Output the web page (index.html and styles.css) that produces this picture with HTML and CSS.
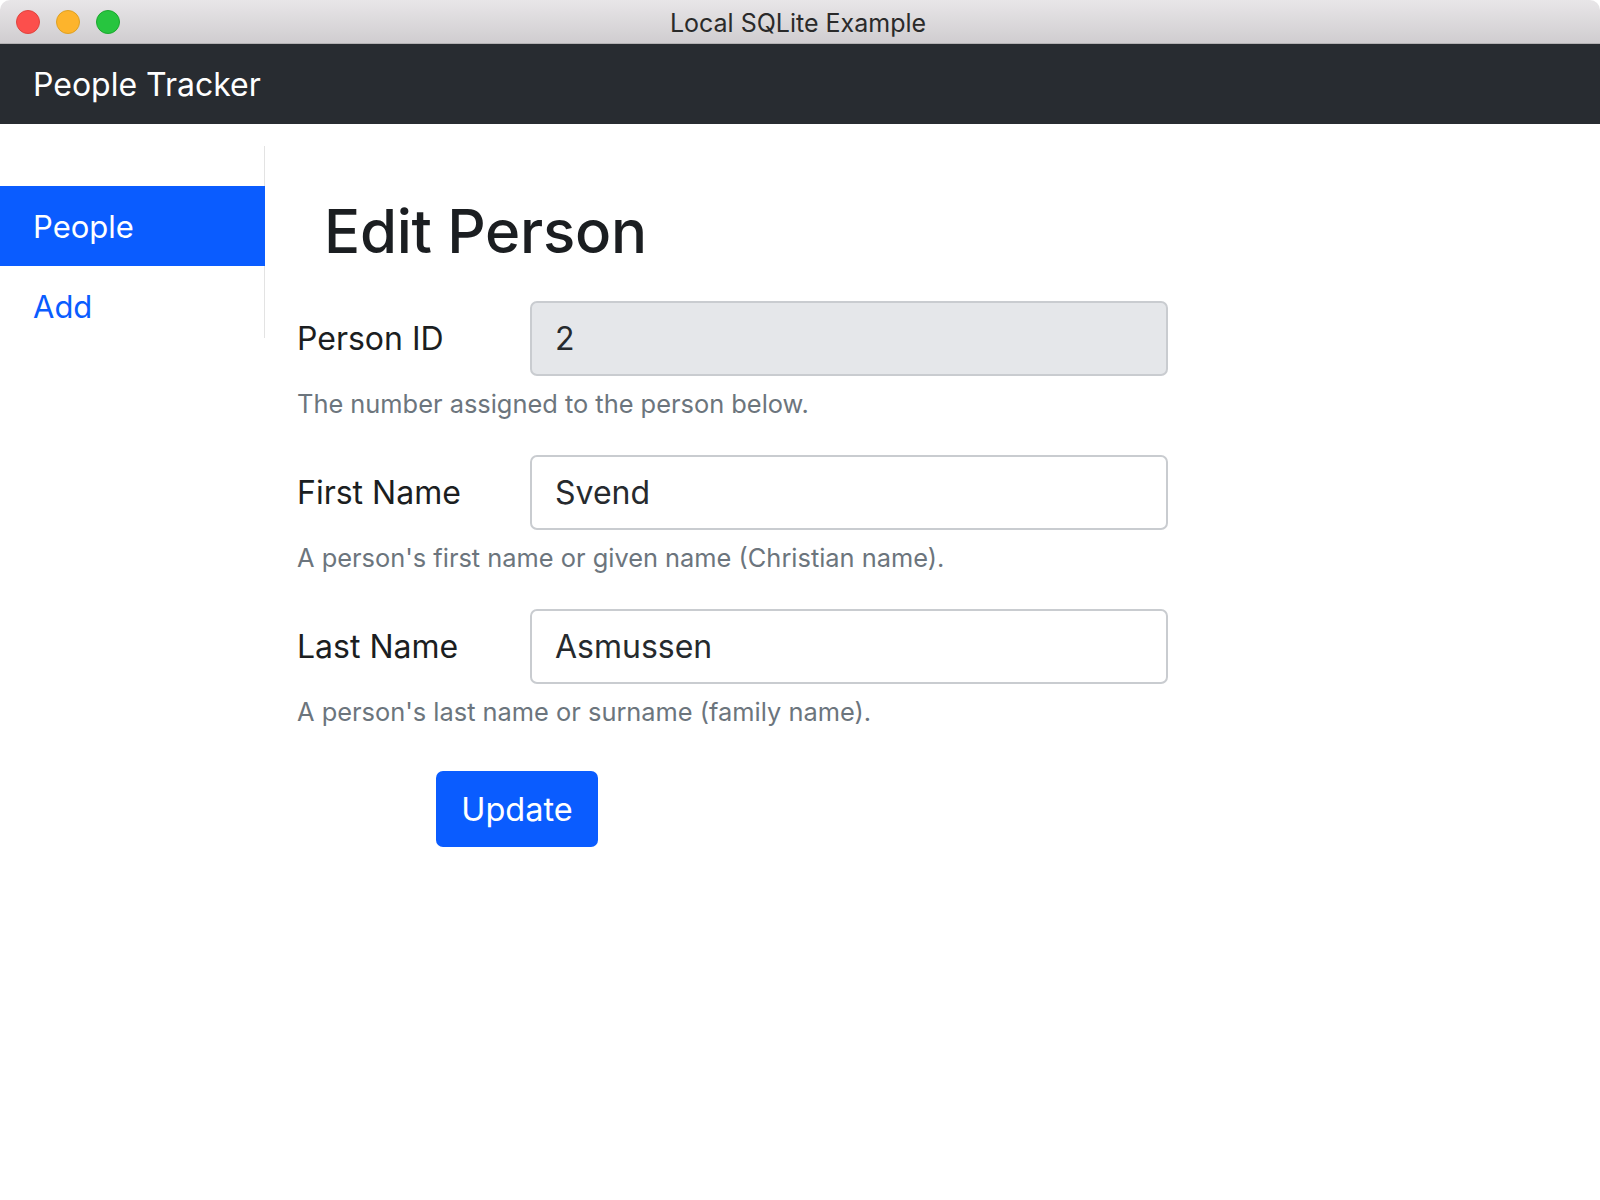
FILE: index.html
```html
<!DOCTYPE html>
<html>
<head>
<meta charset="utf-8">
<title>Local SQLite Example</title>
<link rel="stylesheet" href="styles.css">
</head>
<body>
<div class="window">
  <div class="titlebar">
    <div class="lights">
      <span class="light red"></span>
      <span class="light yellow"></span>
      <span class="light green"></span>
    </div>
    <div class="title">Local SQLite Example</div>
  </div>
  <div class="navbar">
    <span class="brand">People Tracker</span>
  </div>
  <div class="body">
    <nav class="sidebar">
      <a class="nav-item active">People</a>
      <a class="nav-item">Add</a>
    </nav>
    <main class="main">
      <h1 class="heading">Edit Person</h1>
      <form class="form">
        <div class="group">
          <div class="row">
            <label class="label">Person ID</label>
            <div class="input disabled">2</div>
          </div>
          <div class="help">The number assigned to the person below.</div>
        </div>
        <div class="group">
          <div class="row">
            <label class="label">First Name</label>
            <div class="input">Svend</div>
          </div>
          <div class="help">A person's first name or given name (Christian name).</div>
        </div>
        <div class="group">
          <div class="row">
            <label class="label">Last Name</label>
            <div class="input">Asmussen</div>
          </div>
          <div class="help">A person's last name or surname (family name).</div>
        </div>
        <div class="actions">
          <button type="button" class="btn">Update</button>
        </div>
      </form>
    </main>
  </div>
</div>
</body>
</html>
```
FILE: styles.css
```css
* { box-sizing: border-box; }
html, body { margin: 0; padding: 0; background: #ffffff; }
body { font-family: Inter, "Liberation Sans", Arial, sans-serif; color: #212529; }
.window { width: 1600px; height: 1200px; background: #fff; overflow: hidden; }
.titlebar {
  height: 44px;
  background: linear-gradient(#e8e6e8, #d0cdd0);
  border-bottom: 1px solid #b3b1b3;
  border-radius: 10px 10px 0 0;
  display: flex;
  align-items: center;
  position: relative;
}
.lights { display: flex; gap: 16px; padding-left: 16px; padding-top: 1px; }
.light { width: 24px; height: 24px; border-radius: 50%; display: block; }
.red { background: #fc4f4c; border: 1px solid #e0443e; }
.yellow { background: #fdb42c; border: 1px solid #dea123; }
.green { background: #27c53f; border: 1px solid #1ba82e; }
.title {
  position: absolute; left: 0; right: 0; top: 0; bottom: 0;
  display: flex; align-items: center; justify-content: center;
  font-size: 25px; color: #2a2a2a; padding-top: 2px; padding-right: 4px;
}
.navbar {
  height: 80px;
  background: #282c31;
  display: flex;
  align-items: center;
  padding-left: 33px;
}
.brand { color: #fff; font-size: 32px; }
.body { display: flex; align-items: flex-start; }
.sidebar {
  width: 265px;
  margin-top: 22px;
  padding: 40px 0 0;
  border-right: 1px solid #e3e3e3;
  display: flex; flex-direction: column;
  height: 192px;
}
.nav-item {
  display: flex; align-items: center;
  height: 80px; padding-left: 33px;
  font-size: 31px; color: #0a5cff; flex-shrink: 0;
}
.nav-item.active { background: #0a5cff; color: #fff; margin-right: -1px; }
.main { padding-left: 32px; flex: 1; }
.heading {
  margin: 68px 0 0 27px;
  font-size: 60px; font-weight: 500; line-height: 78px; color: #1b1e21;
  letter-spacing: -0.3px;
}
.form { margin-top: 31px; width: 872px; }
.group { margin-bottom: 35px; }
.row { display: flex; align-items: center; }
.label { width: 233px; font-size: 32px; color: #1b1e21; }
.input {
  width: 638px; height: 75px;
  border: 2px solid #c9ccd0; border-radius: 7px;
  display: flex; align-items: center; padding-left: 23px;
  font-size: 32px; color: #262a2e; background: #fff;
}
.input.disabled { background: #e5e7ea; }
.help { margin-top: 12px; font-size: 25.4px; color: #6c757d; line-height: 32px; }
.actions { padding-left: 139px; padding-top: 8px; }
.btn {
  width: 162px; height: 76px;
  background: #0a5cff; color: #fff; border: none; border-radius: 7px;
  font-family: Inter, "Liberation Sans", Arial, sans-serif;
  font-size: 32.5px;
}
```
